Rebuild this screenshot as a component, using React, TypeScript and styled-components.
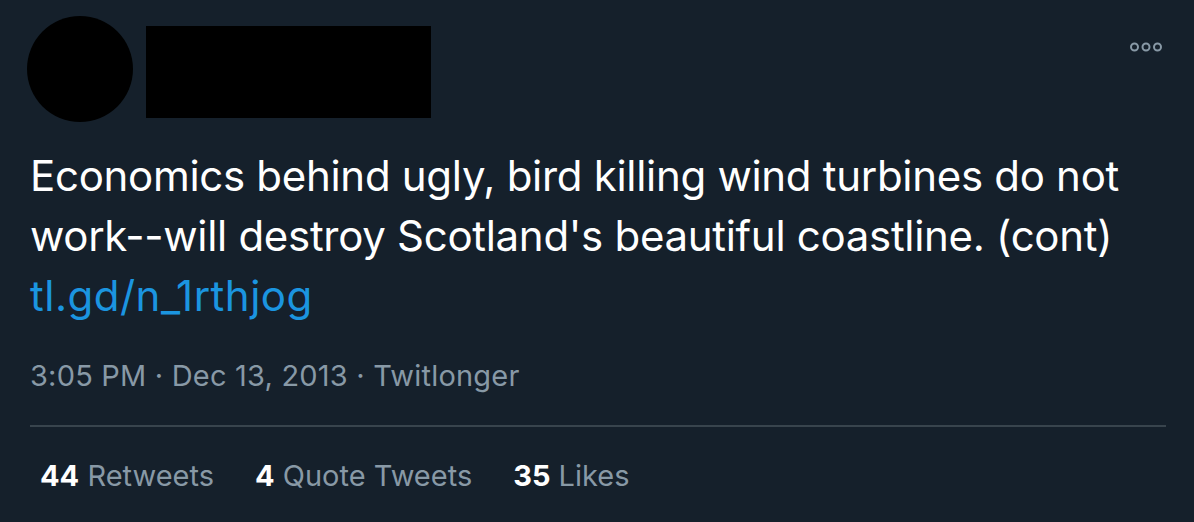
import React from "react";
import styled, { createGlobalStyle } from "styled-components";

const Global = createGlobalStyle`
  html, body {
    margin: 0;
    padding: 0;
    background: #15202b;
  }
  body {
    font-family: Inter, "Noto Sans", "Liberation Sans", sans-serif;
    -webkit-font-smoothing: antialiased;
  }
`;

const Card = styled.div`
  width: 1194px;
  height: 522px;
  background: #15202b;
  box-sizing: border-box;
  padding: 16px 28px 0 30px;
  overflow: hidden;
`;

const Header = styled.div`
  display: flex;
  align-items: flex-start;
  margin-left: -3px;
`;

const Avatar = styled.div`
  width: 106px;
  height: 106px;
  border-radius: 50%;
  background: #000;
  flex-shrink: 0;
`;

const NameBlock = styled.div`
  width: 285px;
  height: 92px;
  background: #000;
  margin: 10px 0 0 13px;
`;

const MoreButton = styled.button`
  margin-left: auto;
  margin-top: 24px;
  margin-right: 2px;
  background: none;
  border: none;
  padding: 0;
  display: flex;
  color: #8899a6;
  cursor: pointer;
`;

const TweetText = styled.div`
  margin-top: 24px;
  font-size: 42px;
  line-height: 60px;
  color: #ffffff;
  letter-spacing: -0.3px;
`;

const Link = styled.a`
  color: #1b95e0;
  text-decoration: none;
  letter-spacing: 0.5px;
`;

const Meta = styled.div`
  margin-top: 31px;
  font-size: 29px;
  line-height: 37.5px;
  color: #8899a6;
  letter-spacing: 0.2px;
`;

const Divider = styled.div`
  margin-top: 30px;
  height: 2px;
  background: #38444d;
`;

const Stats = styled.div`
  display: flex;
  gap: 41px;
  padding-left: 10px;
  margin-top: 30px;
  font-size: 29px;
  line-height: 37.5px;
  color: #8899a6;
  letter-spacing: 0;
`;

const Stat = styled.span``;

const Count = styled.strong`
  color: #ffffff;
  font-weight: 700;
`;

const DotsIcon = () => (
  <svg width="36" height="14" viewBox="0 0 36 14" fill="none">
    <circle cx="6.5" cy="7" r="3.5" stroke="currentColor" strokeWidth="2" />
    <circle cx="18" cy="7" r="3.5" stroke="currentColor" strokeWidth="2" />
    <circle cx="29.5" cy="7" r="3.5" stroke="currentColor" strokeWidth="2" />
  </svg>
);

export default function App() {
  return (
    <>
      <Global />
      <Card>
        <Header>
          <Avatar />
          <NameBlock />
          <MoreButton aria-label="More">
            <DotsIcon />
          </MoreButton>
        </Header>
        <TweetText>
          Economics behind ugly, bird killing wind turbines do not
          <br />
          work--will destroy Scotland's beautiful coastline. (cont)
          <br />
          <Link href="#">tl.gd/n_1rthjog</Link>
        </TweetText>
        <Meta>3:05 PM · Dec 13, 2013 · Twitlonger</Meta>
        <Divider />
        <Stats>
          <Stat>
            <Count>44</Count> Retweets
          </Stat>
          <Stat>
            <Count>4</Count> Quote Tweets
          </Stat>
          <Stat>
            <Count>35</Count> Likes
          </Stat>
        </Stats>
      </Card>
    </>
  );
}
